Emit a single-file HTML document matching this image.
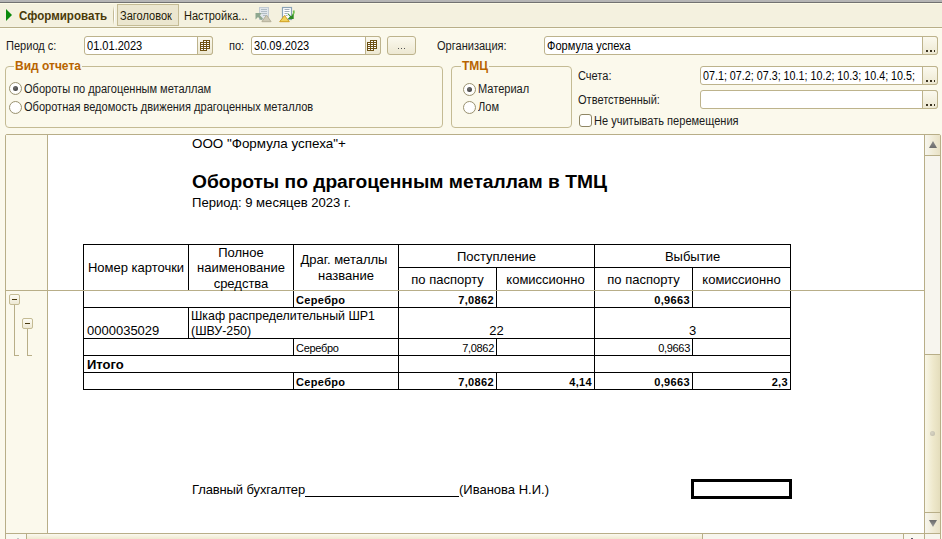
<!DOCTYPE html>
<html><head><meta charset="utf-8">
<style>
html,body{margin:0;padding:0}
body{width:942px;height:539px;overflow:hidden;position:relative;background:#fbf9ec;font-family:"Liberation Sans",sans-serif;color:#1a1a1a}
.a{position:absolute;white-space:nowrap}
.t11{font-size:12px;line-height:11px;transform:scaleX(.92);transform-origin:0 0}
.t13{font-size:13px;line-height:13px;color:#000}
.inp{position:absolute;box-sizing:border-box;border:1px solid #bdb38c;border-radius:3px;background:#fff;height:19px}
.btn{position:absolute;box-sizing:border-box;top:-1px;right:-1px;width:16px;height:19px;border:1px solid #bdb38c;border-radius:0 3px 3px 0;background:linear-gradient(#fbf9ee,#ede8d2)}
.dots{position:absolute;left:3px;bottom:2px;width:9px;height:2px;background:repeating-linear-gradient(90deg,#3a3320 0 2px,transparent 2px 4px)}
.grp{position:absolute;box-sizing:border-box;border:1px solid #c4bb94;border-radius:4px}
.gt{position:absolute;top:-6px;font-weight:bold;font-size:12px;line-height:11px;color:#b86400;background:#fbf9ec;padding:0 1px}
.rad{position:absolute;box-sizing:border-box;width:13px;height:13px;border-radius:50%;border:1px solid #9a9272;background:radial-gradient(circle at 40% 40%,#fff 50%,#f6f4ea)}
.rad.on::after{content:"";position:absolute;left:3px;top:3px;width:5px;height:5px;border-radius:50%;background:radial-gradient(circle at 40% 35%,#707070,#303030)}
.cell{position:absolute;white-space:nowrap;font-size:13px;line-height:13px;color:#000}
.ln{position:absolute;background:#000}
.b11{font-size:11px;line-height:11px;font-weight:bold;letter-spacing:.35px}
.obox{box-sizing:border-box;width:11px;height:11px;border:1px solid #c4bb94;border-radius:2px;background:linear-gradient(#fdfcf4,#eee9d4)}
.minus{position:absolute;left:2px;top:4px;width:5px;height:1px;background:#4a3a10}
.r11{font-size:11px;line-height:11px;letter-spacing:-.3px}
</style></head><body>
<!-- top strip -->
<div class="a" style="left:0;top:0;width:942px;height:2px;background:#b5b5b5"></div>
<div class="a" style="left:0;top:2px;width:942px;height:1px;background:#717171"></div>
<div class="a" style="left:0;top:3px;width:942px;height:1px;background:#fdfbe6"></div>
<div class="a" style="left:0;top:4px;width:942px;height:22px;background:#f4f1df"></div>
<div class="a" style="left:0;top:26px;width:942px;height:1px;background:#f5f3e2"></div>
<div class="a" style="left:0;top:27px;width:942px;height:1px;background:#b8ae88"></div>
<div class="a" style="left:0;top:28px;width:942px;height:1px;background:#fefef2"></div>

<!-- toolbar -->
<div class="a" style="left:6px;top:9px;width:0;height:0;border-left:6px solid #0a8a0a;border-top:6px solid transparent;border-bottom:6px solid transparent"></div>
<div class="a" style="left:19px;top:11px;font-size:12px;line-height:11px;font-weight:bold;color:#4a3a08;transform:scaleX(.965);transform-origin:0 0">Сформировать</div>
<div class="a" style="left:113px;top:6px;width:1px;height:19px;background:linear-gradient(rgba(200,192,160,0),#c4bb98 30%,#c4bb98 70%,rgba(200,192,160,0))"></div><div class="a" style="left:114px;top:6px;width:1px;height:19px;background:linear-gradient(rgba(255,255,255,0),#fff 30%,#fff 70%,rgba(255,255,255,0))"></div>
<div class="a" style="left:117px;top:4px;width:62px;height:22px;box-sizing:border-box;border:1px solid #c4bb94;background:#ebe6cf"></div>
<div class="a t11" style="left:120px;top:11px;color:#1e1a08">Заголовок</div>
<div class="a t11" style="left:184px;top:11px;color:#1e1a08">Настройка...</div>

<!-- toolbar icons -->
<svg class="a" style="left:252px;top:4px" width="24" height="22" viewBox="0 0 24 22">
  <rect x="7.5" y="3.5" width="9" height="12" fill="#e0e6ea" stroke="#c3ccd3"/>
  <path d="M9 5.5h6M9 7.5h6M10 9.5h5M11 11.5h4" stroke="#b0bcc4" stroke-width="1"/>
  <path d="M3.5 9h6.5l-2.2 2.2 3.2 3.2-1.8 1.8-3.2-3.2-2.5 2.5z" fill="#8ea78f"/>
  <path d="M14.5 11l4.6 6.7h-9.2z" fill="#cdc9b5" stroke="#b5b09a" stroke-width="1" stroke-linejoin="round"/>
</svg>
<svg class="a" style="left:276px;top:4px" width="24" height="22" viewBox="0 0 24 22">
  <rect x="6.5" y="3.5" width="9" height="12" fill="#fdfeff" stroke="#8ba3b6" stroke-width="1.2"/>
  <path d="M8.5 5.5h5M8.5 7.5h5M8.5 9.5h3M9.5 11.5h2" stroke="#a4b0ba" stroke-width="1"/>
  <path d="M17.5 6.5c0.8 1.5 0.2 3.5-1.2 4.8" stroke="#72c050" stroke-width="1.6" fill="none"/>
  <path d="M11.8 9l3.3 3.3 2.6-2.3v5h-6l2.3-2.4-2.2-2.3z" fill="#2d8a22"/>
  <path d="M8.5 11.5l4.8 6.2h-9.6z" fill="#f0d35c" stroke="#cf9f22" stroke-width="1" stroke-linejoin="round"/>
</svg>
<!-- calendar icons -->
<svg class="a" style="z-index:5;left:200px;top:40px" width="10" height="11" viewBox="0 0 10 11" shape-rendering="crispEdges"><path d="M0 2H3V0H10V9H7V11H0Z" fill="#fff"/><path d="M3 0h7v1H3zM0 2h10v1H0zM0 4h10v1H0zM0 6h10v1H0zM0 8h10v1H0zM0 10h7v1H0zM0 2h1v9H0zM3 0h1v11H3zM6 0h1v11H6zM9 0h1v9H9z" fill="#6e5214"/></svg>
<svg class="a" style="z-index:5;left:367px;top:40px" width="10" height="11" viewBox="0 0 10 11" shape-rendering="crispEdges"><path d="M0 2H3V0H10V9H7V11H0Z" fill="#fff"/><path d="M3 0h7v1H3zM0 2h10v1H0zM0 4h10v1H0zM0 6h10v1H0zM0 8h10v1H0zM0 10h7v1H0zM0 2h1v9H0zM3 0h1v11H3zM6 0h1v11H6zM9 0h1v9H9z" fill="#6e5214"/></svg>
<!-- form row 1 -->
<div class="a t11" style="left:6px;top:41px">Период с:</div>
<div class="inp" style="left:84px;top:36px;width:129px"><div class="a t11" style="left:2px;top:4px;color:#000">01.01.2023</div>
  <div class="btn"></div></div>
<div class="a t11" style="left:229px;top:41px">по:</div>
<div class="inp" style="left:251px;top:36px;width:130px"><div class="a t11" style="left:2px;top:4px;color:#000">30.09.2023</div>
  <div class="btn"></div></div>
<div class="a" style="left:387px;top:36px;width:29px;height:19px;box-sizing:border-box;border:1px solid #bdb38c;border-radius:3px;background:linear-gradient(#fbf9ee,#ede8d2)"><div class="a" style="left:10px;top:11px;width:8px;height:1px;background:repeating-linear-gradient(90deg,#555 0 1px,transparent 1px 3px)"></div></div>
<div class="a t11" style="left:437px;top:41px">Организация:</div>
<div class="inp" style="left:544px;top:36px;width:394px"><div class="a t11" style="left:2px;top:4px;color:#000">Формула успеха</div>
  <div class="btn"><div class="dots"></div></div></div>

<!-- group 1 -->
<div class="grp" style="left:5px;top:66px;width:438px;height:62px"><div class="gt" style="left:8px">Вид отчета</div></div>
<div class="rad on" style="left:9px;top:82px"></div>
<div class="a t11" style="left:24px;top:84px">Обороты по драгоценным металлам</div>
<div class="rad" style="left:9px;top:101px"></div>
<div class="a t11" style="left:24px;top:102px">Оборотная ведомость движения драгоценных металлов</div>

<!-- group 2 -->
<div class="grp" style="left:451px;top:66px;width:121px;height:62px"><div class="gt" style="left:9px">ТМЦ</div></div>
<div class="rad on" style="left:463px;top:83px"></div>
<div class="a t11" style="left:478px;top:84px">Материал</div>
<div class="rad" style="left:463px;top:101px"></div>
<div class="a t11" style="left:478px;top:102px">Лом</div>

<div class="a t11" style="left:578px;top:71px">Счета:</div>
<div class="inp" style="left:700px;top:66px;width:238px"><div class="a t11" style="left:2px;top:4px;color:#000;transform:scaleX(.895)">07.1; 07.2; 07.3; 10.1; 10.2; 10.3; 10.4; 10.5;</div>
  <div class="btn"><div class="dots"></div></div></div>
<div class="a t11" style="left:578px;top:95px">Ответственный:</div>
<div class="inp" style="left:700px;top:90px;width:238px"><div class="btn"><div class="dots"></div></div></div>
<div class="a" style="left:579px;top:114px;width:13px;height:13px;box-sizing:border-box;border:1px solid #8f8664;border-radius:3px;background:#fff"></div>
<div class="a t11" style="left:594px;top:116px">Не учитывать перемещения</div>

<!-- report frame -->
<div class="a" style="left:5px;top:134px;width:936px;height:410px;box-sizing:border-box;border:1px solid #b8ae88;border-radius:2px 2px 0 0;background:#fff"></div>
<div class="a" style="left:6px;top:135px;width:41px;height:398px;background:#fbf9ec;border-right:1px solid #b8ae88"></div>

<!-- freeze line -->
<div class="a" style="left:6px;top:290px;width:918px;height:1px;background:#b8ae88"></div>
<!-- outline tree -->
<div class="a" style="left:14px;top:304px;width:1px;height:52px;background:#b8ae88"></div>
<div class="a" style="left:14px;top:355px;width:5px;height:1px;background:#b8ae88"></div>
<div class="a" style="left:27px;top:328px;width:1px;height:28px;background:#b8ae88"></div>
<div class="a" style="left:27px;top:355px;width:5px;height:1px;background:#b8ae88"></div>
<div class="a obox" style="left:9px;top:294px"><div class="minus"></div></div>
<div class="a obox" style="left:22px;top:318px"><div class="minus"></div></div>
<!-- vertical scrollbar -->
<div class="a" style="left:924px;top:135px;width:1px;height:398px;background:#b8ae88"></div>
<div class="a" style="left:925px;top:135px;width:15px;height:398px;background:#f7f5ee"></div>
<div class="a" style="left:925px;top:135px;width:15px;height:20px;background:linear-gradient(90deg,#f7f6ef,#f0ebd6 55%,#e9e2c7)"></div>
<div class="a" style="left:925px;top:155px;width:15px;height:1px;background:#b8ae88"></div>
<div class="a" style="left:929px;top:141px;width:8px;height:7px;clip-path:polygon(50% 0,100% 100%,0 100%);background:linear-gradient(#8a8a8a,#6e6e6e)"></div>
<div class="a" style="left:925px;top:354px;width:15px;height:1px;background:#b8ae88"></div>
<div class="a" style="left:925px;top:355px;width:15px;height:157px;background:linear-gradient(90deg,#f9f7e8,#eee8cb 55%,#e4ddbc)"></div>
<div class="a" style="left:930px;top:431px;width:5px;height:5px;border-radius:50%;background:radial-gradient(circle at 40% 40%,#d8d4c4,#bdb9a8)"></div>
<div class="a" style="left:925px;top:512px;width:15px;height:1px;background:#b8ae88"></div>
<div class="a" style="left:925px;top:513px;width:15px;height:20px;background:linear-gradient(90deg,#f7f6ef,#f0ebd6 55%,#e9e2c7)"></div>
<div class="a" style="left:929px;top:520px;width:8px;height:7px;clip-path:polygon(0 0,100% 0,50% 100%);background:linear-gradient(#6a6a6a,#9a9a9a)"></div>
<!-- horizontal scrollbar -->
<div class="a" style="left:6px;top:533px;width:934px;height:1px;background:#b8ae88"></div>
<div class="a" style="left:6px;top:534px;width:20px;height:5px;background:#f9f8f0"></div>
<div class="a" style="left:26px;top:534px;width:1px;height:5px;background:#b8ae88"></div>
<div class="a" style="left:27px;top:534px;width:675px;height:5px;background:linear-gradient(#fbf9ef,#efe9d0)"></div>
<div class="a" style="left:702px;top:534px;width:1px;height:5px;background:#b8ae88"></div>
<div class="a" style="left:703px;top:534px;width:200px;height:5px;background:#f7f5ee"></div>
<div class="a" style="left:903px;top:534px;width:1px;height:5px;background:#b8ae88"></div>
<div class="a" style="left:904px;top:534px;width:20px;height:5px;background:#f9f8f0"></div>
<div class="a" style="left:924px;top:534px;width:1px;height:5px;background:#b8ae88"></div>
<div class="a" style="left:925px;top:534px;width:15px;height:5px;background:#f7f5ee"></div>

<div class="a" style="left:911px;top:538px;width:2px;height:1px;background:#5a5a66"></div>
<div class="a" style="left:17px;top:538px;width:2px;height:1px;background:#c4c4c4"></div>
<!-- report content -->
<div class="cell" style="left:192px;top:137px;font-size:13.4px">ООО "Формула успеха"+</div>
<div class="cell" style="left:192px;top:172px;font-size:19.2px;line-height:19px;font-weight:bold">Обороты по драгоценным металлам в ТМЦ</div>
<div class="cell" style="left:192px;top:196px;font-size:13.1px">Период: 9 месяцев 2023 г.</div>

<div class="ln" style="left:83px;top:244px;width:708px;height:1px"></div>
<div class="ln" style="left:398px;top:267px;width:393px;height:1px"></div>
<div class="ln" style="left:83px;top:244px;width:1px;height:46px"></div>
<div class="ln" style="left:188px;top:244px;width:1px;height:46px"></div>
<div class="ln" style="left:293px;top:244px;width:1px;height:46px"></div>
<div class="ln" style="left:398px;top:244px;width:1px;height:46px"></div>
<div class="ln" style="left:594px;top:244px;width:1px;height:46px"></div>
<div class="ln" style="left:790px;top:244px;width:1px;height:46px"></div>
<div class="ln" style="left:496px;top:267px;width:1px;height:23px"></div>
<div class="ln" style="left:692px;top:267px;width:1px;height:23px"></div>
<div class="ln" style="left:83px;top:307px;width:708px;height:1px"></div>
<div class="ln" style="left:83px;top:338px;width:708px;height:1px"></div>
<div class="ln" style="left:83px;top:355px;width:708px;height:1px"></div>
<div class="ln" style="left:83px;top:372px;width:708px;height:1px"></div>
<div class="ln" style="left:83px;top:389px;width:708px;height:1px"></div>
<div class="ln" style="left:83px;top:291px;width:1px;height:99px"></div>
<div class="ln" style="left:398px;top:291px;width:1px;height:99px"></div>
<div class="ln" style="left:594px;top:291px;width:1px;height:99px"></div>
<div class="ln" style="left:790px;top:291px;width:1px;height:99px"></div>
<div class="ln" style="left:188px;top:307px;width:1px;height:32px"></div>
<div class="ln" style="left:293px;top:291px;width:1px;height:17px"></div>
<div class="ln" style="left:496px;top:291px;width:1px;height:17px"></div>
<div class="ln" style="left:692px;top:291px;width:1px;height:17px"></div>
<div class="ln" style="left:293px;top:338px;width:1px;height:18px"></div>
<div class="ln" style="left:496px;top:338px;width:1px;height:18px"></div>
<div class="ln" style="left:692px;top:338px;width:1px;height:18px"></div>
<div class="ln" style="left:293px;top:372px;width:1px;height:18px"></div>
<div class="ln" style="left:496px;top:372px;width:1px;height:18px"></div>
<div class="ln" style="left:692px;top:372px;width:1px;height:18px"></div>

<!-- table header text -->
<div class="cell" style="left:83px;top:261px;width:106px;text-align:center">Номер карточки</div>
<div class="cell" style="left:188px;top:246px;width:106px;text-align:center">Полное</div>
<div class="cell" style="left:188px;top:261px;width:106px;text-align:center">наименование</div>
<div class="cell" style="left:188px;top:277px;width:106px;text-align:center">средства</div>
<div class="cell" style="left:291px;top:253px;width:106px;text-align:center">Драг. металлы</div>
<div class="cell" style="left:293px;top:269px;width:106px;text-align:center">название</div>
<div class="cell" style="left:398px;top:250px;width:197px;text-align:center">Поступление</div>
<div class="cell" style="left:398px;top:273px;width:99px;text-align:center">по паспорту</div>
<div class="cell" style="left:496px;top:273px;width:99px;text-align:center">комиссионно</div>
<div class="cell" style="left:594px;top:250px;width:197px;text-align:center">Выбытие</div>
<div class="cell" style="left:594px;top:273px;width:99px;text-align:center">по паспорту</div>
<div class="cell" style="left:692px;top:273px;width:99px;text-align:center">комиссионно</div>
<!-- row 1 -->
<div class="cell b11" style="left:296px;top:295px">Серебро</div>
<div class="cell b11" style="left:398px;top:295px;width:96px;text-align:right">7,0862</div>
<div class="cell b11" style="left:594px;top:295px;width:96px;text-align:right">0,9663</div>
<!-- row 2 -->
<div class="cell" style="left:87px;top:324px">0000035029</div>
<div class="cell" style="left:191px;top:310px;font-size:12.4px">Шкаф распределительный ШР1</div>
<div class="cell" style="left:191px;top:325px;font-size:12.4px">(ШВУ-250)</div>
<div class="cell" style="left:398px;top:324px;width:197px;text-align:center">22</div>
<div class="cell" style="left:594px;top:324px;width:197px;text-align:center">3</div>
<!-- row 3 -->
<div class="cell r11" style="left:296px;top:343px">Серебро</div>
<div class="cell r11" style="left:398px;top:343px;width:96px;text-align:right">7,0862</div>
<div class="cell r11" style="left:594px;top:343px;width:96px;text-align:right">0,9663</div>
<!-- row 4 -->
<div class="cell" style="left:87px;top:358px;font-weight:bold">Итого</div>
<!-- row 5 -->
<div class="cell b11" style="left:296px;top:377px">Серебро</div>
<div class="cell b11" style="left:398px;top:377px;width:96px;text-align:right">7,0862</div>
<div class="cell b11" style="left:496px;top:377px;width:96px;text-align:right">4,14</div>
<div class="cell b11" style="left:594px;top:377px;width:96px;text-align:right">0,9663</div>
<div class="cell b11" style="left:692px;top:377px;width:96px;text-align:right">2,3</div>
<!-- signature -->
<div class="cell" style="left:192px;top:483px;letter-spacing:-.12px">Главный бухгалтер</div>
<div class="ln" style="left:305px;top:496px;width:154px;height:1px"></div>
<div class="cell" style="left:459px;top:483px">(Иванова Н.И.)</div>
<div class="a" style="left:691px;top:479px;width:101px;height:20px;box-sizing:border-box;border:3px solid #000"></div>

</body></html>
